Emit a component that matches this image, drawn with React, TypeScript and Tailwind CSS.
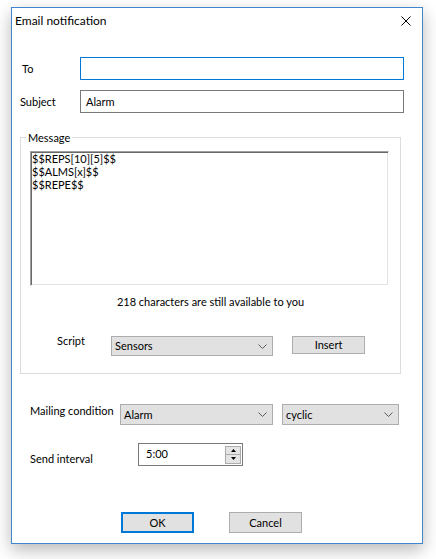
import React from "react";

function Chevron() {
  return (
    <svg width="9" height="5" viewBox="0 0 9 5" className="shrink-0">
      <polyline points="0.5,0.5 4.5,4.5 8.5,0.5" fill="none" stroke="#5c5c5c" strokeWidth="1" />
    </svg>
  );
}

function Select({ value, className }: { value: string; className: string }) {
  return (
    <div
      className={
        "flex items-center justify-between border border-[#adadad] bg-[#e1e1e1] pl-[3px] pr-[5px] text-[11px] leading-[14px] text-black " +
        className
      }
    >
      <span>{value}</span>
      <Chevron />
    </div>
  );
}

function Button({ label, className }: { label: string; className: string }) {
  return (
    <div
      className={
        "flex items-center justify-center bg-[#e1e1e1] text-[11px] leading-[14px] text-black " + className
      }
    >
      {label}
    </div>
  );
}

export default function App() {
  return (
    <div className="h-[559px] w-[436px] overflow-hidden bg-white pl-[11px] pt-[7px] font-['Lato',sans-serif] text-black">
      <div className="flex h-[537px] w-[412px] flex-col border border-[#3f86cf] bg-white shadow-[0_6px_16px_rgba(0,0,0,0.28)]">
        {/* Title bar */}
        <div className="flex h-[25px] shrink-0 items-center justify-between pl-[3px] pr-[11px]">
          <span className="text-[12px] leading-[16px]">Email notification</span>
          <svg width="10" height="10" viewBox="0 0 10 10">
            <path d="M0.5 0.5 L9.5 9.5 M9.5 0.5 L0.5 9.5" stroke="#000" strokeWidth="1" fill="none" />
          </svg>
        </div>

        {/* To */}
        <div className="mt-[24px] flex items-center">
          <span className="ml-[10px] w-[58px] text-[11px] leading-[14px]">To</span>
          <div className="h-[23px] w-[324px] border border-[#0078d7] bg-white" />
        </div>

        {/* Subject */}
        <div className="mt-[10px] flex items-center">
          <span className="ml-[8px] w-[60px] text-[11px] leading-[14px]">Subject</span>
          <div className="flex h-[23px] w-[324px] items-center border border-[#7a7a7a] bg-white pl-[5px] text-[11px] leading-[14px]">
            Alarm
          </div>
        </div>

        {/* Message group */}
        <fieldset className="mt-[17px] ml-[8px] w-[381px] border border-[#dcdcdc] pt-[6px] pb-[17px]">
          <legend className="ml-[5px] px-[2px] text-[11px] leading-[15px]">Message</legend>
          <div className="ml-[9px] h-[135px] w-[359px] whitespace-pre border-t border-l border-r border-b border-t-[#a0a0a0] border-l-[#a0a0a0] border-r-white border-b-white bg-white pl-[1px] text-[11px] leading-[13px] shadow-[inset_1px_1px_0_#696969,inset_-1px_-1px_0_#e3e3e3]">
            {"$$REPS[10][5]$$\n$$ALMS[x]$$\n$$REPE$$"}
          </div>
          <div className="mt-[9px] text-center text-[11px] leading-[14px]">218 characters are still available to you</div>
          <div className="mt-[27px] flex items-start">
            <span className="-mt-[2px] ml-[36px] w-[54px] text-[11px] leading-[14px]">Script</span>
            <Select value="Sensors" className="h-[20px] w-[162px]" />
            <Button label="Insert" className="ml-[19px] h-[18px] w-[73px] border border-[#adadad]" />
          </div>
        </fieldset>

        {/* Mailing condition */}
        <div className="mt-[30px] flex items-start">
          <span className="ml-[18px] w-[90px] text-[11px] leading-[14px]">Mailing condition</span>
          <Select value="Alarm" className="h-[21px] w-[153px]" />
          <Select value="cyclic" className="ml-[9px] h-[21px] w-[117px]" />
        </div>

        {/* Send interval */}
        <div className="mt-[18px] flex items-start">
          <span className="mt-[9px] ml-[18px] w-[108px] text-[11px] leading-[14px]">Send interval</span>
          <div className="flex h-[23px] w-[105px] items-center justify-between border border-[#7a7a7a] bg-white pl-[7px] pr-[1px]">
            <span className="-mt-[1px] text-[11px] leading-[14px]">5:00</span>
            <div className="flex h-[18px] w-[16px] flex-col border border-[#acacac] bg-[#e5e5e5]">
              <div className="flex flex-1 items-center justify-center border-b border-[#acacac]">
                <svg width="5" height="3" viewBox="0 0 5 3">
                  <polygon points="2.5,0 5,3 0,3" fill="#000" />
                </svg>
              </div>
              <div className="flex flex-1 items-center justify-center">
                <svg width="5" height="3" viewBox="0 0 5 3">
                  <polygon points="0,0 5,0 2.5,3" fill="#000" />
                </svg>
              </div>
            </div>
          </div>
        </div>

        {/* Buttons */}
        <div className="mt-[46px] flex items-start">
          <Button label="OK" className="ml-[109px] h-[21px] w-[73px] border-2 border-[#0078d7]" />
          <Button label="Cancel" className="ml-[35px] h-[21px] w-[73px] border border-[#adadad]" />
        </div>
      </div>
    </div>
  );
}
